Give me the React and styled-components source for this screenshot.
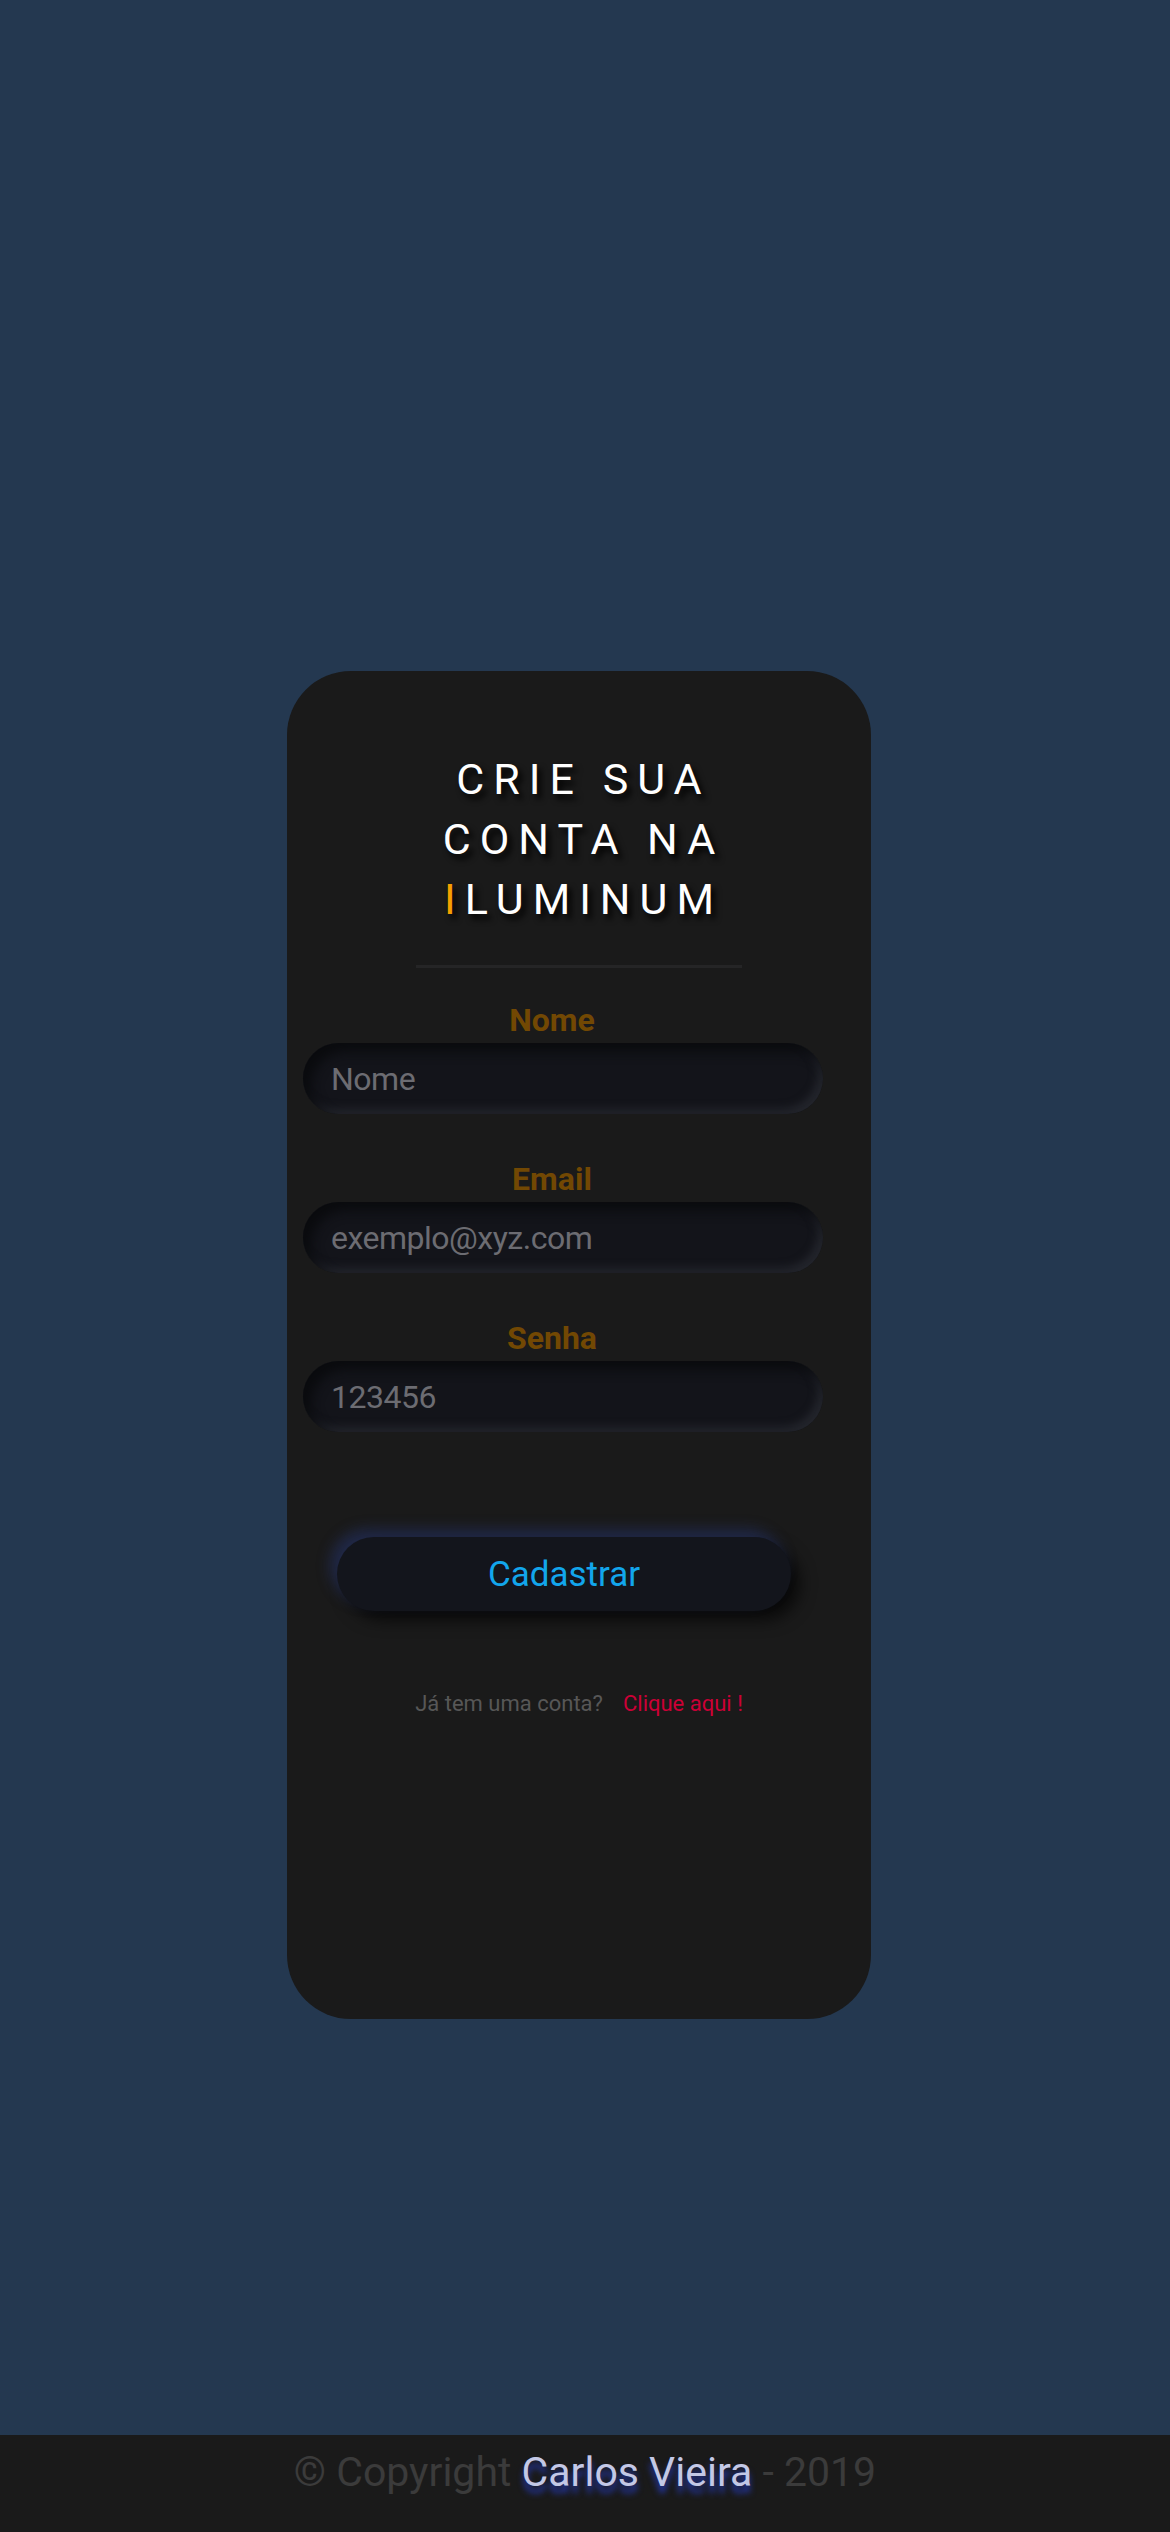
import React from 'react';
import styled, { createGlobalStyle } from 'styled-components';

const FONT = `Roboto, "Liberation Sans", sans-serif`;

const Global = createGlobalStyle`
  html, body {
    margin: 0;
    padding: 0;
    background: #243850;
    font-family: ${FONT};
  }
  * { box-sizing: border-box; }
`;

const Page = styled.div`
  width: 1170px;
  min-height: 2532px;
  display: flex;
  flex-direction: column;
`;

const Main = styled.main`
  height: 2435px;
  padding-top: 671px;
  display: flex;
  justify-content: center;
  align-items: flex-start;
`;

const Card = styled.section`
  width: 584px;
  height: 1348px;
  margin-right: 12px;
  background: #1a1a1a;
  border-radius: 64px;
  padding-top: 78px;
  display: flex;
  flex-direction: column;
  align-items: center;
`;

const Title = styled.h1`
  margin: 0;
  text-align: center;
  color: #fff;
  font-family: ${FONT};
  font-weight: 400;
  font-size: 43px;
  line-height: 60px;
  letter-spacing: 9px;
  text-shadow: 4px 5px 6px #000;
  padding-left: 9px;
`;

const Accent = styled.span`
  color: #f5a000;
`;

const Divider = styled.hr`
  width: 326px;
  margin: 36px 0 0;
  border: 0;
  height: 3px;
  background: #252526;
`;

const Form = styled.form`
  width: 100%;
  display: flex;
  flex-direction: column;
  margin-top: 34px;
`;

const Field = styled.div`
  display: flex;
  flex-direction: column;
  margin-bottom: ${({ $last }) => ($last ? '0' : '47px')};
`;

const Label = styled.label`
  width: 530px;
  text-align: center;
  font-family: ${FONT};
  font-weight: 700;
  font-size: 32px;
  line-height: 36px;
  color: #724803;
  margin-bottom: 5px;
`;

const Input = styled.input`
  width: 520px;
  height: 71px;
  margin-left: 16px;
  border: 0;
  outline: none;
  border-radius: 36px;
  background: #13141a;
  padding: 0 28px;
  font-family: ${FONT};
  font-size: 32px;
  letter-spacing: -0.5px;
  color: #8a8a90;
  box-shadow: inset 8px 8px 12px #0a0b0e, inset -5px -5px 8px #24262d;

  &::placeholder {
    color: #6c6c72;
  }
`;

const Button = styled.button`
  align-self: flex-start;
  width: 454px;
  height: 74px;
  margin: 105px 0 0 50px;
  border: 0;
  border-radius: 37px;
  background: #13151c;
  color: #12a6ec;
  font-family: ${FONT};
  font-size: 35px;
  cursor: pointer;
  box-shadow: -7px -8px 14px rgba(42, 62, 140, 0.4), 9px 9px 16px rgba(0, 0, 0, 0.65);
`;

const Login = styled.p`
  margin: 80px 0 0;
  font-family: ${FONT};
  font-size: 22px;
  color: #575757;
  display: flex;
  gap: 20px;
`;

const LoginLink = styled.a`
  color: #cc0036;
  text-decoration: none;
`;

const Footer = styled.footer`
  height: 97px;
  background: #1a1a1a;
  display: flex;
  justify-content: center;
  padding-top: 12px;
  font-family: ${FONT};
  font-size: 41px;
  line-height: 50px;
  color: #3b3b3b;
  white-space: pre;
`;

const Author = styled.span`
  color: #c3c8e6;
  text-shadow: 0 7px 6px #2438b0;
`;

const fields = [
  { label: 'Nome', placeholder: 'Nome' },
  { label: 'Email', placeholder: 'exemplo@xyz.com' },
  { label: 'Senha', placeholder: '123456' },
];

export default function App() {
  return (
    <Page>
      <Global />
      <Main>
        <Card>
          <Title>
            CRIE SUA
            <br />
            CONTA NA
            <br />
            <Accent>I</Accent>LUMINUM
          </Title>
          <Divider />
          <Form onSubmit={(e) => e.preventDefault()}>
            {fields.map((f, i) => (
              <Field key={f.label} $last={i === fields.length - 1}>
                <Label>{f.label}</Label>
                <Input type="text" placeholder={f.placeholder} />
              </Field>
            ))}
            <Button type="submit">Cadastrar</Button>
          </Form>
          <Login>
            Já tem uma conta?
            <LoginLink href="#">Clique aqui !</LoginLink>
          </Login>
        </Card>
      </Main>
      <Footer>
        {'© Copyright '}
        <Author>Carlos Vieira</Author>
        {' - 2019'}
      </Footer>
    </Page>
  );
}
